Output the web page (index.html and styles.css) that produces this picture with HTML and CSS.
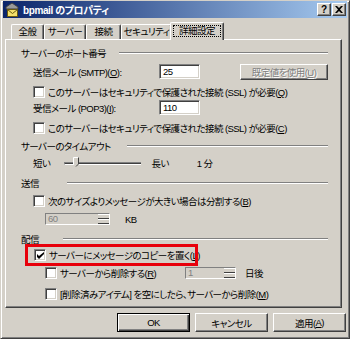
FILE: index.html
```html
<!DOCTYPE html>
<html lang="ja">
<head>
    <meta charset="UTF-8">
    <title>bpmail のプロパティ</title>
    <link rel="stylesheet" href="styles.css">
</head>
<body>
    <div class="window">
        <div class="titlebar">
            <svg class="app-icon" width="16" height="16" viewBox="0 0 16 16">
                <path d="M2 5 L8 1 L14 5 L14 7 L2 7 Z" fill="#9a9a9a" stroke="#404040" stroke-width="1"/>
                <rect x="3.5" y="7.5" width="10" height="7" fill="#f4e06a" stroke="#6a5a10"/>
                <path d="M3.5 7.5 L8.5 11.5 L13.5 7.5" fill="none" stroke="#6a5a10"/>
            </svg>
            <span class="title">bpmail のプロパティ</span>
            <div class="caption-buttons">
                <span class="cap-btn">?</span>
                <span class="cap-btn cap-close">
                    <svg width="8" height="7" viewBox="0 0 8 7"><path d="M0 0 L2 0 L4 2 L6 0 L8 0 L5 3.5 L8 7 L6 7 L4 5 L2 7 L0 7 L3 3.5 Z" fill="#000"/></svg>
                </span>
            </div>
        </div>

        <div class="tabs">
            <div class="tab tab-general">全般</div>
            <div class="tab tab-server">サーバー</div>
            <div class="tab tab-conn">接続</div>
            <div class="tab tab-security">セキュリティ</div>
            <div class="tab tab-active">詳細設定</div>
        </div>

        <div class="panel">
            <!-- ports -->
            <div class="group-head gh-ports">
                <span class="gh-label">サーバーのポート番号</span>
                <span class="gh-line"></span>
            </div>
            <div class="row row-smtp indent">
                <span class="field-label">送信メール (SMTP)(<u>O</u>):</span>
                <span class="textbox">25</span>
                <span class="button btn-disabled">既定値を使用(<u>U</u>)</span>
            </div>
            <div class="row row-ssl1 indent">
                <span class="checkbox"></span>
                <span>このサーバーはセキュリティで保護された接続 (SSL) が必要(<u>Q</u>)</span>
            </div>
            <div class="row row-pop indent">
                <span class="field-label">受信メール (POP3)(<u>I</u>):</span>
                <span class="textbox">110</span>
            </div>
            <div class="row row-ssl2 indent">
                <span class="checkbox"></span>
                <span>このサーバーはセキュリティで保護された接続 (SSL) が必要(<u>C</u>)</span>
            </div>

            <!-- timeout -->
            <div class="group-head gh-timeout">
                <span class="gh-label">サーバーのタイムアウト</span>
                <span class="gh-line"></span>
            </div>
            <div class="row row-slider indent">
                <span>短い</span>
                <span class="slider">
                    <span class="slider-track"></span>
                    <svg class="slider-thumb" width="6" height="10" viewBox="0 0 6 10">
                        <path d="M0.5 0.5 L5.5 0.5 L5.5 7 L3 9.5 L0.5 7 Z" fill="#d4d0c8"/>
                        <path d="M0.5 7 L0.5 0.5 L5.5 0.5" fill="none" stroke="#fff"/>
                        <path d="M5.5 0.5 L5.5 7 L3 9.5" fill="none" stroke="#404040"/>
                    </svg>
                </span>
                <span class="slider-long">長い</span>
                <span class="slider-value">1 分</span>
            </div>

            <!-- send -->
            <div class="group-head gh-send">
                <span class="gh-label">送信</span>
                <span class="gh-line"></span>
            </div>
            <div class="row row-split indent">
                <span class="checkbox"></span>
                <span>次のサイズよりメッセージが大きい場合は分割する(<u>B</u>)</span>
            </div>
            <div class="row row-size indent2">
                <span class="spinbox spin-size">
                    <span class="spin-text">60</span>
                    <span class="spin-arrows"><span class="spin-up"></span><span class="spin-down"></span></span>
                </span>
                <span class="unit">KB</span>
            </div>

            <!-- delivery -->
            <div class="group-head gh-deliver">
                <span class="gh-label">配信</span>
                <span class="gh-line"></span>
            </div>
            <div class="row row-keep">
                <span class="checkbox checked">
                    <svg width="7" height="7" viewBox="0 0 7 7"><path d="M0 2 L0 5 L2 7 L7 2 L7 0 L2 4 Z" fill="#000"/></svg>
                </span>
                <span>サーバーにメッセージのコピーを置く(<u>L</u>)</span>
            </div>
            <div class="row row-delete indent2">
                <span class="checkbox"></span>
                <span class="delete-label">サーバーから削除する(<u>R</u>)</span>
                <span class="spinbox spin-days">
                    <span class="spin-text">1</span>
                    <span class="spin-arrows"><span class="spin-up"></span><span class="spin-down"></span></span>
                </span>
                <span class="unit">日後</span>
            </div>
            <div class="row row-trash indent2">
                <span class="checkbox"></span>
                <span>[削除済みアイテム] を空にしたら、サーバーから削除(<u>M</u>)</span>
            </div>
        </div>

        <div class="dialog-buttons">
            <span class="button btn-main btn-default">OK</span>
            <span class="button btn-main">キャンセル</span>
            <span class="button btn-main">適用(<u>A</u>)</span>
        </div>
    </div>
</body>
</html>
```

FILE: styles.css
```css
body {
    margin: 0;
    font-family: "Liberation Sans", "Noto Sans CJK JP", sans-serif;
    font-size: 9.5px;
    letter-spacing: -0.55px;
    font-feature-settings: "palt";
    color: #000;
    background: #d4d0c8;
}
u {
    text-decoration: underline;
    text-underline-offset: 1px;
}
.window {
    box-sizing: border-box;
    width: 350px;
    height: 339px;
    padding: 0 2px 0 2px;
    background: #d4d0c8;
    border: 1px solid;
    border-color: #d4d0c8 #404040 #404040 #d4d0c8;
    box-shadow: inset 1px 1px #fff, inset -1px -1px #808080;
    overflow: hidden;
    white-space: nowrap;
}

/* title bar */
.titlebar {
    height: 17px;
    display: flex;
    align-items: center;
    background: linear-gradient(to right, #0a246a, #a6caf0);
    color: #fff;
    padding-left: 1px;
}
.app-icon {
    flex: none;
}
.title {
    margin-left: 3px;
    font-weight: bold;
    font-size: 10px;
    letter-spacing: -0.4px;
}
.caption-buttons {
    margin-left: auto;
    display: flex;
    gap: 1px;
    margin-right: 1px;
}
.cap-btn {
    box-sizing: border-box;
    width: 14px;
    height: 13px;
    background: #d4d0c8;
    color: #000;
    font-family: "Liberation Sans", sans-serif;
    font-weight: bold;
    font-size: 10px;
    line-height: 11px;
    letter-spacing: 0;
    text-align: center;
    border: 1px solid;
    border-color: #fff #404040 #404040 #fff;
    box-shadow: inset -1px -1px #808080;
    display: flex;
    align-items: center;
    justify-content: center;
}

/* tabs */
.tabs {
    display: flex;
    align-items: flex-end;
    height: 17px;
    margin-top: 4px;
    padding-left: 8px;
    position: relative;
    z-index: 1;
}
.tab {
    box-sizing: border-box;
    height: 15px;
    padding-top: 1px;
    text-align: center;
    border: 1px solid;
    border-bottom: none;
    border-color: #fff #404040 #404040 #fff;
    box-shadow: inset -1px 0 #808080;
    border-radius: 2px 2px 0 0;
    line-height: 12px;
}
.tab-general { width: 33px; }
.tab-server { width: 42px; }
.tab-conn { width: 35px; }
.tab-security { width: 51px; }
.tab-active {
    width: 54px;
    height: 18px;
    margin-left: -2px;
    margin-bottom: -1px;
    padding-top: 2px;
    background: #d4d0c8;
    outline: 1px dotted #000;
    outline-offset: -4px;
}

/* panel */
.panel {
    box-sizing: border-box;
    width: 337px;
    height: 269px;
    margin-left: 2px;
    border: 1px solid;
    border-color: #fff #404040 #404040 #fff;
    box-shadow: inset -1px -1px #808080;
    display: flex;
    flex-direction: column;
    padding: 0 13px 0 15px;
}
.group-head {
    display: flex;
    align-items: center;
    height: 14px;
}
.gh-line {
    flex: 1;
    height: 0;
    border-top: 1px solid #808080;
    border-bottom: 1px solid #fff;
}
.gh-ports { margin-top: 6px; }
.gh-ports .gh-label { width: 98px; }
.gh-timeout { margin-top: 4px; }
.gh-timeout .gh-label { width: 106px; }
.gh-send { margin-top: 6px; }
.gh-send .gh-label { width: 46px; }
.gh-deliver { margin-top: 7px; }
.gh-deliver .gh-label { width: 42px; }

.row {
    display: flex;
    align-items: center;
}
.indent { padding-left: 12px; }
.indent2 { padding-left: 24px; }

.row-smtp { height: 18px; margin-top: 3px; }
.row-ssl1 { height: 14px; margin-top: 4px; }
.row-pop { height: 15px; margin-top: 1px; }
.row-ssl2 { height: 14px; margin-top: 6px; }
.row-slider { height: 14px; margin-top: 3px; }
.row-split { height: 14px; margin-top: 4px; }
.row-size { height: 12px; margin-top: 5px; }
.row-keep {
    box-sizing: border-box;
    height: 16px;
    margin-top: 1px;
    margin-left: 7px;
    padding-left: 6px;
    width: 167px;
    outline: 3px solid #e8000b;
}
.row-delete { height: 12px; margin-top: 4px; }
.row-trash { height: 14px; margin-top: 8px; }

.checkbox + span { margin-left: -1px; }

.field-label {
    width: 126px;
}
.textbox {
    box-sizing: border-box;
    width: 41px;
    height: 15px;
    padding: 1px 3px;
    background: #fff;
    border: 1px solid;
    border-color: #808080 #fff #fff #808080;
    box-shadow: inset 1px 1px #404040, inset -1px -1px #d4d0c8;
    line-height: 12px;
}
.row-smtp .textbox { margin-top: -1px; }

.button {
    box-sizing: border-box;
    display: flex;
    align-items: center;
    justify-content: center;
    border: 1px solid;
    border-color: #fff #404040 #404040 #fff;
    box-shadow: inset -1px -1px #808080;
}
.btn-disabled {
    width: 88px;
    height: 16px;
    margin-left: 40px;
    color: #808080;
    text-shadow: 1px 1px #fff;
}

.checkbox {
    box-sizing: border-box;
    flex: none;
    width: 12px;
    height: 12px;
    margin-right: 4px;
    background: #fff;
    border: 1px solid;
    border-color: #808080 #fff #fff #808080;
    box-shadow: inset 1px 1px #404040, inset -1px -1px #d4d0c8;
    display: flex;
    align-items: center;
    justify-content: center;
}

/* slider */
.slider {
    position: relative;
    width: 77px;
    height: 12px;
    margin-left: 14px;
    display: flex;
    align-items: center;
}
.slider-track {
    box-sizing: border-box;
    width: 100%;
    height: 3px;
    border-top: 1px solid #808080;
    border-left: 1px solid #808080;
    border-bottom: 1px solid #fff;
    background: #404040;
}
.slider-thumb {
    position: absolute;
    left: 9px;
    top: 0;
}
.slider-long { margin-left: 10px; }
.slider-value { margin-left: 28px; }

/* spin boxes */
.spinbox {
    box-sizing: border-box;
    height: 12px;
    display: flex;
    background: #d4d0c8;
    border: 1px solid;
    border-color: #808080 #fff #fff #808080;
    color: #808080;
    line-height: 10px;
}
.spin-size { width: 65px; }
.spin-days { width: 51px; }
.spin-text {
    flex: 1;
    padding-left: 2px;
}
.spin-arrows {
    width: 11px;
    display: flex;
    flex-direction: column;
}
.spin-up, .spin-down {
    flex: 1;
    border-top: 1px solid #fff;
    border-bottom: 1px solid #404040;
    background: #d4d0c8;
}
.unit { margin-left: 15px; }
.row-delete .unit { margin-left: 9px; }
.delete-label { width: 125px; }

/* dialog buttons */
.dialog-buttons {
    display: flex;
    justify-content: flex-end;
    gap: 5px;
    margin-top: 5px;
    padding-right: 1px;
}
.btn-main {
    width: 73px;
    height: 19px;
}
.btn-default {
    border: 1px solid #000;
    box-shadow: inset 1px 1px #fff, inset -1px -1px #404040, inset -2px -2px #808080;
}
```
